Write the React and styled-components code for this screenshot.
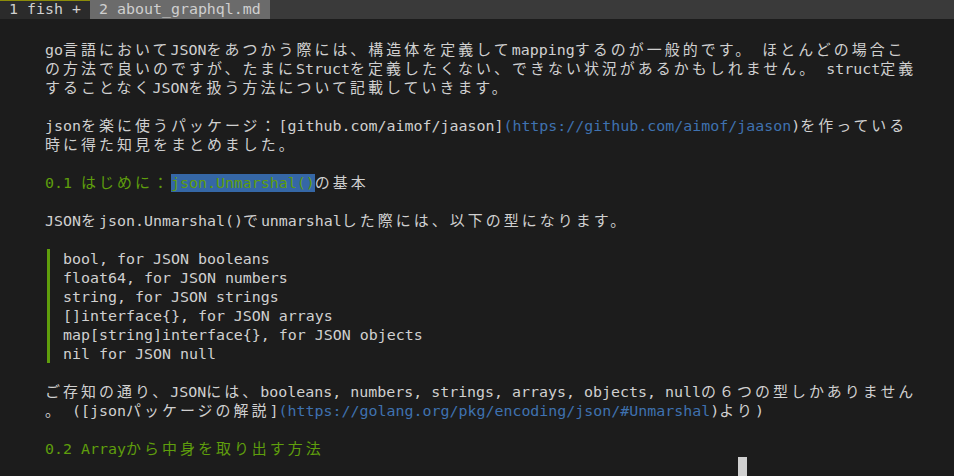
import React from "react";
import styled, { createGlobalStyle } from "styled-components";

const CELL = 9;
const ROW = 19;

const GlobalStyle = createGlobalStyle`
  html, body { margin: 0; padding: 0; background: #1c1c1c; }
  body { width: 954px; height: 476px; overflow: hidden; }
`;

const Terminal = styled.div`
  width: 954px;
  height: 476px;
  background: #1c1c1c;
  color: #d0d0d0;
  display: flex;
  flex-direction: column;
  font-family: "DejaVu Sans Mono", "Noto Sans CJK JP", monospace;
  font-size: 14.95px;
  overflow: hidden;
`;

const TabBar = styled.div`
  flex: none;
  display: flex;
  height: ${ROW}px;
  line-height: ${ROW}px;
  background: #3a3a3a;
`;

const Tab = styled.div`
  padding: 0 ${CELL}px;
  white-space: pre;
  background: ${(p) => (p.$active ? "#2b2b2b" : "#6b6b6b")};
  color: ${(p) => (p.$active ? "#d0d0d0" : "#cfcfcf")};
  box-shadow: ${(p) => (p.$active ? "inset 0 1px 0 #8c8c0a" : "none")};
`;

const Body = styled.div`
  display: flex;
  flex-direction: column;
  padding-top: ${ROW + 2}px;
`;

const Line = styled.div`
  height: ${ROW}px;
  line-height: ${ROW + 2}px;
  padding-left: ${(p) => (p.$indent ?? 5) * CELL}px;
  white-space: pre;
`;

const Quote = styled.div`
  display: flex;
  flex-direction: column;
  margin-left: ${5 * CELL + 2}px;
  padding-left: 13px;
  border-left: 3px solid #5f9e0c;
`;

const QuoteLine = styled.div`
  height: ${ROW}px;
  line-height: ${ROW + 2}px;
  white-space: pre;
`;

const Wide = styled.span`
  letter-spacing: ${2 * CELL - 14.95}px;
`;

const Green = styled.span`
  color: #5f9e0c;
`;

const Link = styled.span`
  color: #3f72b0;
`;

const Selected = styled.span`
  color: #5f9e0c;
  background: #3567a6;
`;

const Cursor = styled.span`
  display: inline-block;
  width: ${CELL}px;
  height: ${ROW}px;
  margin-left: ${(p) => p.$col * CELL}px;
  margin-top: -1px;
  background: #d0d0d0;
  vertical-align: top;
`;

const isWide = (ch) => {
  const c = ch.codePointAt(0);
  return (
    (c >= 0x1100 && c <= 0x115f) ||
    (c >= 0x2e80 && c <= 0xa4cf) ||
    (c >= 0xac00 && c <= 0xd7a3) ||
    (c >= 0xf900 && c <= 0xfaff) ||
    (c >= 0xfe30 && c <= 0xfe4f) ||
    (c >= 0xff00 && c <= 0xff60) ||
    (c >= 0xffe0 && c <= 0xffe6)
  );
};

function T({ children }) {
  const s = String(children);
  const runs = [];
  let cur = "";
  let wide = null;
  for (const ch of s) {
    const w = isWide(ch);
    if (wide === null || w === wide) {
      cur += ch;
    } else {
      runs.push([wide, cur]);
      cur = ch;
    }
    wide = w;
  }
  if (cur) runs.push([wide, cur]);
  return runs.map(([w, txt], i) =>
    w ? <Wide key={i}>{txt}</Wide> : <React.Fragment key={i}>{txt}</React.Fragment>
  );
}

const quoteLines = [
  "bool, for JSON booleans",
  "float64, for JSON numbers",
  "string, for JSON strings",
  "[]interface{}, for JSON arrays",
  "map[string]interface{}, for JSON objects",
  "nil for JSON null",
];

export default function App() {
  return (
    <>
      <GlobalStyle />
      <Terminal>
        <TabBar>
          <Tab $active>1 fish +</Tab>
          <Tab>2 about_graphql.md</Tab>
        </TabBar>
        <Body>
          <Line>
            <T>go言語においてJSONをあつかう際には、構造体を定義してmappingするのが一般的です。 ほとんどの場合こ</T>
          </Line>
          <Line>
            <T>の方法で良いのですが、たまにStructを定義したくない、できない状況があるかもしれません。 struct定義</T>
          </Line>
          <Line>
            <T>することなくJSONを扱う方法について記載していきます。</T>
          </Line>
          <Line />
          <Line>
            <T>jsonを楽に使うパッケージ：[github.com/aimof/jaason]</T>
            <Link>(https://github.com/aimof/jaason</Link>
            <T>)を作っている</T>
          </Line>
          <Line>
            <T>時に得た知見をまとめました。</T>
          </Line>
          <Line />
          <Line>
            <Green>
              <T>0.1 はじめに：</T>
            </Green>
            <Selected>json.Unmarshal()</Selected>
            <T>の基本</T>
          </Line>
          <Line />
          <Line>
            <T>JSONをjson.Unmarshal()でunmarshalした際には、以下の型になります。</T>
          </Line>
          <Line />
          <Quote>
            {quoteLines.map((q) => (
              <QuoteLine key={q}>{q}</QuoteLine>
            ))}
          </Quote>
          <Line />
          <Line>
            <T>ご存知の通り、JSONには、booleans, numbers, strings, arrays, objects, nullの６つの型しかありません</T>
          </Line>
          <Line>
            <T>。 ([jsonパッケージの解説]</T>
            <Link>(https://golang.org/pkg/encoding/json/#Unmarshal</Link>
            <T>)より)</T>
          </Line>
          <Line />
          <Line>
            <Green>
              <T>0.2 Arrayから中身を取り出す方法</T>
            </Green>
          </Line>
          <Line $indent={0}>
            <Cursor $col={82} />
          </Line>
        </Body>
      </Terminal>
    </>
  );
}
